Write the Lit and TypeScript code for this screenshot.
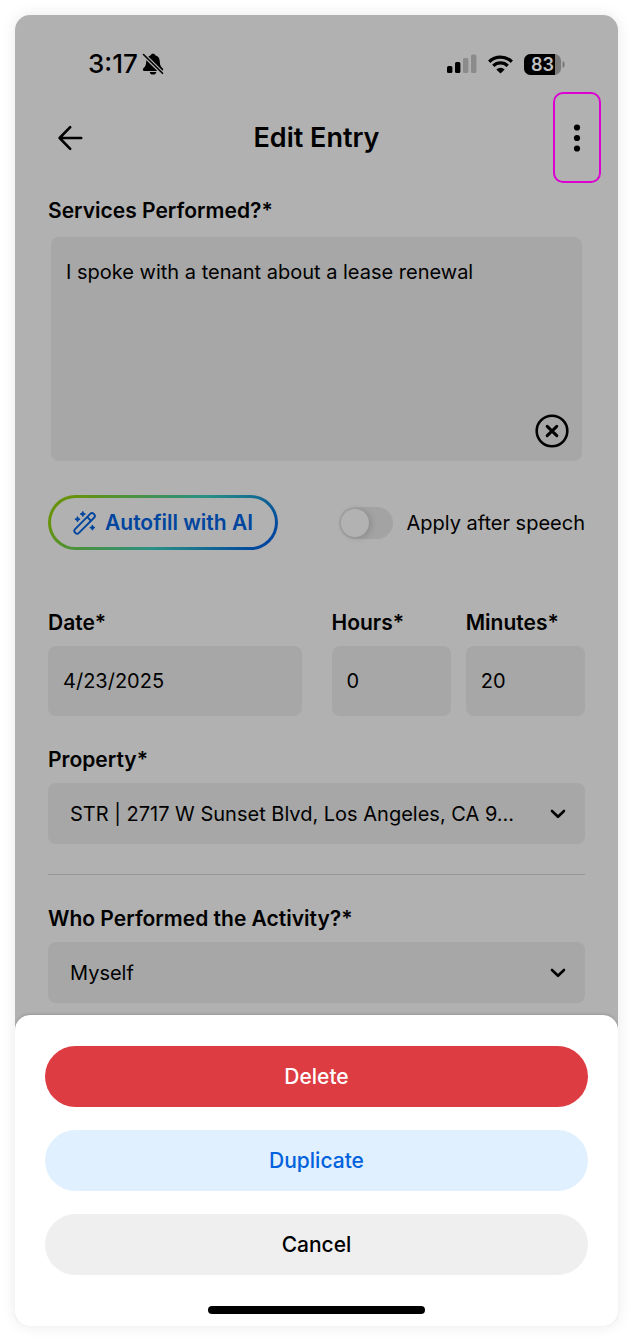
import { LitElement, html, css, svg } from "lit";
import { customElement, state } from "lit/decorators.js";

const chevron = html`<svg class="chevron" width="16" height="10" viewBox="0 0 16 10" aria-hidden="true">
  <path d="M2 2l6 5.8L14 2" fill="none" stroke="currentColor" stroke-width="2.6" stroke-linecap="round" stroke-linejoin="round" />
</svg>`;

const sparkle = (x: number, y: number) =>
  svg`<path d="M${x} ${y - 2.6}l.8 1.8 1.8.8-1.8.8-.8 1.8-.8-1.8-1.8-.8 1.8-.8z" fill="currentColor" stroke="currentColor" stroke-width="1" stroke-linejoin="round"/>`;

@customElement("app-root")
export class AppRoot extends LitElement {
  @state() private afterSpeech = false;

  static styles = css`
    :host {
      display: block;
      box-sizing: border-box;
      padding: 15px;
      background: #fff;
      color: #000;
      font-family: Inter, "Liberation Sans", sans-serif;
      font-size: 20px;
      line-height: 26px;
    }
    *, *::before { box-sizing: border-box; }
    button, input, select, textarea { font: inherit; color: inherit; margin: 0; border: 0; }
    svg { display: block; }
    .phone {
      border-radius: 15px;
      background: #fff;
      box-shadow: 0 0 15px rgba(0, 0, 0, 0.09);
    }
    .screen {
      background: #b1b1b1;
      border-radius: 15px 15px 0 0;
      padding: 33px 0 27px;
      margin-bottom: -15px;
    }
    .status {
      display: flex;
      align-items: center;
      justify-content: space-between;
      height: 32px;
      padding: 0 53px 0 73px;
    }
    .clock, .signals { display: flex; align-items: center; }
    .clock { gap: 4px; font-size: 26px; font-weight: 500; }
    .signals { gap: 11px; }
    .header {
      display: grid;
      grid-template-columns: 1fr auto 1fr;
      align-items: center;
      margin: 12px 17px 15px;
    }
    .title { margin: 0; font-size: 27px; line-height: 32px; font-weight: 600; }
    .icon-button { display: grid; place-items: center; padding: 0; background: none; }
    .back { width: 34px; height: 34px; margin-left: 21px; }
    .more {
      justify-self: end;
      width: 48px;
      height: 91px;
      border: 2px solid #dc00d2;
      border-radius: 10px;
    }
    .form { padding: 0 33px; }
    .label { display: block; font-size: 21px; font-weight: 600; margin-bottom: 10px; }
    .speech { position: relative; margin: 13px 3px 34px; }
    .speech-text {
      display: block;
      width: 100%;
      height: 224px;
      padding: 22px 15px;
      border-radius: 8px;
      background: #a7a7a7;
      resize: none;
      outline: none;
    }
    .clear { position: absolute; right: 13px; bottom: 13px; }
    .assist { display: flex; align-items: center; justify-content: space-between; margin-bottom: 60px; }
    .autofill {
      display: flex;
      align-items: center;
      gap: 8px;
      height: 55px;
      padding: 0 22px;
      border: 3px solid transparent;
      border-radius: 28px;
      background:
        linear-gradient(#b1b1b1, #b1b1b1) padding-box,
        linear-gradient(135deg, #66930a 10%, #289085 56%, #00479f 92%) border-box;
      color: #00459e;
      font-size: 21px;
      font-weight: 600;
    }
    .toggle { display: flex; align-items: center; gap: 13px; }
    .switch {
      appearance: none;
      width: 54px;
      height: 32px;
      padding: 2px;
      border-radius: 16px;
      background: #a3a3a3;
    }
    .switch::before {
      content: "";
      display: block;
      width: 28px;
      height: 28px;
      border-radius: 50%;
      background: #b2b2b2;
      box-shadow: 2px 1px 6px rgba(0, 0, 0, 0.16);
    }
    .switch:checked::before { margin-left: 22px; }
    .row { display: grid; grid-template-columns: 268fr 119fr 119fr; column-gap: 15px; margin-bottom: 31px; }
    .date { margin-right: 15px; }
    .input {
      display: block;
      width: 100%;
      height: 70px;
      padding: 0 15px;
      border-radius: 8px;
      background: #a7a7a7;
    }
    .picker { display: grid; align-items: center; }
    .picker > * { grid-area: 1 / 1; }
    .select {
      appearance: none;
      width: 100%;
      height: 61px;
      padding: 0 50px 0 22px;
      border-radius: 8px;
      background: #a7a7a7;
    }
    .chevron { justify-self: end; margin-right: 19px; pointer-events: none; }
    .rule { height: 1px; margin: 30px 0 31px; border: 0; background: #979797; }
    .sheet {
      position: relative;
      display: flex;
      flex-direction: column;
      gap: 23px;
      padding: 31px 30px 12px;
      border-radius: 15px;
      background: #fff;
      box-shadow: 0 -1px 3px rgba(0, 0, 0, 0.14);
      clip-path: inset(-4px 0 0 0);
    }
    .action { height: 61px; border-radius: 31px; font-size: 21px; font-weight: 500; }
    .delete { background: #dc3c42; color: #fff; }
    .duplicate { background: #e0f0ff; color: #0062dc; }
    .cancel { background: #efefef; }
    .home { align-self: center; width: 40%; height: 8px; margin-top: 8px; border-radius: 4px; background: #000; }
  `;

  render() {
    return html`
      <main class="phone">
        <div class="screen">
          <div class="status">
            <div class="clock">
              <span>3:17</span>
              <svg width="22" height="22" viewBox="0 0 22 22" aria-hidden="true">
                <path d="M11 .8c-1.3 0-2.100.7-2.300 1.500C5.600 3.200 4.300 5.500 4.200 8.700 4.100 12 3.300 13.500 1.400 15.200c-1 1-.6 2.700.8 2.700h17.600c1.400 0 1.800-1.700.8-2.700-1.900-1.700-2.700-3.200-2.800-6.500-.1-3.200-1.400-5.500-4.500-6.400C13.100 1.500 12.300.8 11 .8zM7.600 19h6.800c-.3 1.600-1.700 2.600-3.400 2.600S7.900 20.600 7.600 19z" />
                <path d="M1.500 1.500l19 18.800" stroke="#b1b1b1" stroke-width="3.900" />
                <path d="M1.500 1.500l19 18.800" stroke="#000" stroke-width="1.600" stroke-linecap="round" />
              </svg>
            </div>
            <div class="signals">
              <svg width="30" height="20" viewBox="0 0 30 20" aria-hidden="true">
                <rect x="0" y="12" width="5.400" height="7" rx="1.500" />
                <rect x="8" y="8" width="5.400" height="11" rx="1.500" />
                <rect x="16" y="4" width="5.400" height="15" rx="1.500" fill="#8b8b8b" />
                <rect x="24" y="0.500" width="5.400" height="18.500" rx="1.500" fill="#8b8b8b" />
              </svg>
              <svg width="25" height="19" viewBox="0 0 25 19" aria-hidden="true">
                <g fill="none" stroke="#000" stroke-width="3.300">
                  <path d="M1.200 6.700a16.200 16.200 0 0 1 22.600 0" />
                  <path d="M5.300 10.900a10.300 10.300 0 0 1 14.400 0" />
                </g>
                <path d="M12.500 18.600l-4.200-4.200a6 6 0 0 1 8.400 0z" />
              </svg>
              <svg width="41" height="21" viewBox="0 0 41 21" role="img" aria-label="Battery 83%">
                <clipPath id="cell"><rect width="37" height="21" rx="6.500" /></clipPath>
                <g clip-path="url(#cell)">
                  <rect width="37" height="21" fill="#797979" />
                  <rect width="31" height="21" />
                </g>
                <path d="M38.500 7v7c1.500-.5 2.200-1.800 2.200-3.500S40 7.500 38.500 7z" fill="#797979" />
                <text x="18.500" y="17" text-anchor="middle" font-size="18" font-weight="600" fill="#c2c2c2">83</text>
              </svg>
            </div>
          </div>

          <header class="header">
            <button class="icon-button back" aria-label="Back">
              <svg width="26" height="26" viewBox="0 0 26 26" fill="none" stroke="#000" stroke-width="2.600" stroke-linecap="round" stroke-linejoin="round">
                <path d="M24.200 13H2.600M13.200 2.200L2.600 13l10.600 10.800" />
              </svg>
            </button>
            <h1 class="title">Edit Entry</h1>
            <button class="icon-button more" aria-label="More options">
              <svg width="8" height="28" viewBox="0 0 8 28">
                <circle cx="4" cy="3.500" r="3.100" /><circle cx="4" cy="14" r="3.100" /><circle cx="4" cy="24.500" r="3.100" />
              </svg>
            </button>
          </header>

          <form class="form" @submit=${(e: Event) => e.preventDefault()}>
            <label class="label" for="services">Services Performed?*</label>
            <div class="speech">
              <textarea class="speech-text" id="services" .value=${"I spoke with a tenant about a lease renewal"}></textarea>
              <button type="button" class="icon-button clear" aria-label="Clear text">
                <svg width="34" height="34" viewBox="0 0 34 34" fill="none" stroke="#000" stroke-linecap="round">
                  <circle cx="17" cy="17" r="15.300" stroke-width="2.600" />
                  <path d="M12.200 12.400l9.600 9.200M21.800 12.400l-9.600 9.200" stroke-width="3" />
                </svg>
              </button>
            </div>

            <div class="assist">
              <button type="button" class="autofill">
                <svg width="24" height="24" viewBox="0 0 24 24" fill="none" stroke="currentColor" stroke-width="1.900" aria-hidden="true">
                  <rect x="-1.800" y="9.300" width="26.400" height="5.400" rx="2.500" transform="rotate(-45 12 12)" />
                  <path d="M14.200 6l3.800 3.800" />
                  ${sparkle(4.500, 8.200)}${sparkle(9.800, 3)}${sparkle(19.400, 16.600)}
                </svg>
                <span>Autofill with AI</span>
              </button>
              <label class="toggle">
                <input
                  class="switch"
                  type="checkbox"
                  role="switch"
                  .checked=${this.afterSpeech}
                  @change=${(e: Event) => (this.afterSpeech = (e.target as HTMLInputElement).checked)}
                />
                <span>Apply after speech</span>
              </label>
            </div>

            <div class="row">
              <div class="date">
                <label class="label" for="date">Date*</label>
                <input class="input" id="date" type="text" value="4/23/2025" />
              </div>
              <div>
                <label class="label" for="hours">Hours*</label>
                <input class="input" id="hours" type="text" inputmode="numeric" value="0" />
              </div>
              <div>
                <label class="label" for="minutes">Minutes*</label>
                <input class="input" id="minutes" type="text" inputmode="numeric" value="20" />
              </div>
            </div>

            <label class="label" for="property">Property*</label>
            <div class="picker">
              <select class="select" id="property">
                <option>STR | 2717 W Sunset Blvd, Los Angeles, CA 9...</option>
              </select>
              ${chevron}
            </div>

            <hr class="rule" />

            <label class="label" for="performer">Who Performed the Activity?*</label>
            <div class="picker">
              <select class="select" id="performer">
                <option>Myself</option>
              </select>
              ${chevron}
            </div>
          </form>
        </div>

        <section class="sheet" aria-label="Entry actions">
          <button class="action delete">Delete</button>
          <button class="action duplicate">Duplicate</button>
          <button class="action cancel">Cancel</button>
          <div class="home"></div>
        </section>
      </main>
    `;
  }
}
